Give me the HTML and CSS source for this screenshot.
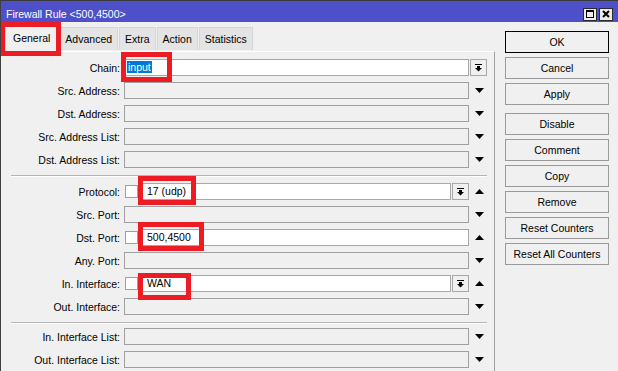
FILE: index.html
```html
<!DOCTYPE html>
<html lang="en">
  <head>
    <meta charset="UTF-8" />
    <meta name="viewport" content="width=device-width, initial-scale=1.0" />
    <title>Firewall Rule &lt;500,4500&gt;</title>
    <link rel="stylesheet" href="styles.css">
  </head>
  <body>
    <div class="window">
      <div class="titlebar">
        <span class="title">Firewall Rule &lt;500,4500&gt;</span>
        <span class="tb_btn first">
          <svg width="8" height="8" viewBox="0 0 8 8"><rect x="0.5" y="1" width="7" height="6.5" fill="none" stroke="#000" stroke-width="1"/><rect x="0" y="0" width="8" height="2" fill="#000"/></svg>
        </span>
        <span class="tb_btn">
          <svg width="8" height="8" viewBox="0 0 8 8"><path d="M1 1 L7 7 M7 1 L1 7" stroke="#000" stroke-width="2"/></svg>
        </span>
      </div>

      <div class="content">
        <div class="main">
          <div class="tabs">
            <div class="tab active">General</div>
            <div class="tab">Advanced</div>
            <div class="tab">Extra</div>
            <div class="tab">Action</div>
            <div class="tab">Statistics</div>
          </div>

          <div class="panel">
            <div class="row">
              <label>Chain:</label>
              <div class="ctrl"><div class="field"><span class="sel">input</span></div></div>
              <div class="tail">
                <span class="dropbtn chain_btn">
                  <svg width="7" height="8" viewBox="0 0 7 8"><rect x="0" y="0" width="7" height="1"/><rect x="2" y="2" width="3" height="2"/><polygon points="0,4 7,4 3.5,7.5"/></svg>
                </span>
              </div>
            </div>
            <div class="row">
              <label>Src. Address:</label>
              <div class="ctrl"><div class="field off"></div></div>
              <div class="tail"><svg class="arrow" width="9" height="5" viewBox="0 0 9 5"><polygon points="0,0 9,0 4.5,5"/></svg></div>
            </div>
            <div class="row">
              <label>Dst. Address:</label>
              <div class="ctrl"><div class="field off"></div></div>
              <div class="tail"><svg class="arrow" width="9" height="5" viewBox="0 0 9 5"><polygon points="0,0 9,0 4.5,5"/></svg></div>
            </div>
            <div class="row">
              <label>Src. Address List:</label>
              <div class="ctrl"><div class="field off"></div></div>
              <div class="tail"><svg class="arrow" width="9" height="5" viewBox="0 0 9 5"><polygon points="0,0 9,0 4.5,5"/></svg></div>
            </div>
            <div class="row">
              <label>Dst. Address List:</label>
              <div class="ctrl"><div class="field off"></div></div>
              <div class="tail"><svg class="arrow" width="9" height="5" viewBox="0 0 9 5"><polygon points="0,0 9,0 4.5,5"/></svg></div>
            </div>

            <div class="sep"></div>

            <div class="row">
              <label>Protocol:</label>
              <div class="ctrl">
                <span class="check"></span>
                <div class="field">17 (udp)</div>
                <span class="dropbtn">
                  <svg width="7" height="8" viewBox="0 0 7 8"><rect x="0" y="0" width="7" height="1"/><rect x="2" y="2" width="3" height="2"/><polygon points="0,4 7,4 3.5,7.5"/></svg>
                </span>
              </div>
              <div class="tail"><svg class="arrow" width="9" height="5" viewBox="0 0 9 5"><polygon points="0,5 9,5 4.5,0"/></svg></div>
            </div>
            <div class="row">
              <label>Src. Port:</label>
              <div class="ctrl"><div class="field off"></div></div>
              <div class="tail"><svg class="arrow" width="9" height="5" viewBox="0 0 9 5"><polygon points="0,0 9,0 4.5,5"/></svg></div>
            </div>
            <div class="row">
              <label>Dst. Port:</label>
              <div class="ctrl">
                <span class="check"></span>
                <div class="field">500,4500</div>
              </div>
              <div class="tail"><svg class="arrow" width="9" height="5" viewBox="0 0 9 5"><polygon points="0,5 9,5 4.5,0"/></svg></div>
            </div>
            <div class="row">
              <label>Any. Port:</label>
              <div class="ctrl"><div class="field off"></div></div>
              <div class="tail"><svg class="arrow" width="9" height="5" viewBox="0 0 9 5"><polygon points="0,0 9,0 4.5,5"/></svg></div>
            </div>
            <div class="row">
              <label>In. Interface:</label>
              <div class="ctrl">
                <span class="check"></span>
                <div class="field">WAN</div>
                <span class="dropbtn">
                  <svg width="7" height="8" viewBox="0 0 7 8"><rect x="0" y="0" width="7" height="1"/><rect x="2" y="2" width="3" height="2"/><polygon points="0,4 7,4 3.5,7.5"/></svg>
                </span>
              </div>
              <div class="tail"><svg class="arrow" width="9" height="5" viewBox="0 0 9 5"><polygon points="0,5 9,5 4.5,0"/></svg></div>
            </div>
            <div class="row">
              <label>Out. Interface:</label>
              <div class="ctrl"><div class="field off"></div></div>
              <div class="tail"><svg class="arrow" width="9" height="5" viewBox="0 0 9 5"><polygon points="0,0 9,0 4.5,5"/></svg></div>
            </div>

            <div class="sep tight"></div>

            <div class="row">
              <label>In. Interface List:</label>
              <div class="ctrl"><div class="field off"></div></div>
              <div class="tail"><svg class="arrow" width="9" height="5" viewBox="0 0 9 5"><polygon points="0,0 9,0 4.5,5"/></svg></div>
            </div>
            <div class="row">
              <label>Out. Interface List:</label>
              <div class="ctrl"><div class="field off"></div></div>
              <div class="tail"><svg class="arrow" width="9" height="5" viewBox="0 0 9 5"><polygon points="0,0 9,0 4.5,5"/></svg></div>
            </div>
          </div>
        </div>

        <div class="side">
          <button class="btn default">OK</button>
          <button class="btn">Cancel</button>
          <button class="btn">Apply</button>
          <button class="btn spaced">Disable</button>
          <button class="btn">Comment</button>
          <button class="btn">Copy</button>
          <button class="btn">Remove</button>
          <button class="btn">Reset Counters</button>
          <button class="btn">Reset All Counters</button>
        </div>
      </div>

      <!-- red highlight boxes -->
      <div class="mark mark_general"></div>
      <div class="mark mark_chain"></div>
      <div class="mark mark_protocol"></div>
      <div class="mark mark_dstport"></div>
      <div class="mark mark_iniface"></div>
    </div>
  </body>
</html>
```

FILE: styles.css
```css
body {
  margin: 0;
  background-color: #f0f0f0;
  font-family: "Liberation Sans", Arial, sans-serif;
  font-size: 10.5px;
  color: #000;
}

.window {
  position: relative;
  width: 618px;
  height: 371px;
  overflow: hidden;
  box-sizing: border-box;
  border-left: 1px solid #404040;
  background-color: #f0f0f0;
}

/* title bar */
.titlebar {
  height: 22px;
  box-sizing: border-box;
  border-top: 1px solid #3a3a3a;
  padding: 5px 5px 0 5px;
  display: flex;
  align-items: center;
  background-color: #4d50c8;
  color: #fff;
}
.title {
  font-size: 10.5px;
}
.tb_btn {
  width: 14px;
  height: 13px;
  box-sizing: border-box;
  border: 1px solid #2b2b2b;
  background-color: #ececec;
  display: flex;
  align-items: center;
  justify-content: center;
  margin-left: 2px;
}
.tb_btn.first {
  margin-left: auto;
}

.content {
  display: flex;
  height: 349px;
}

/* tabs */
.main {
  width: 494px;
}
.tabs {
  height: 29px;
  box-sizing: border-box;
  padding-left: 4px;
  display: flex;
  align-items: flex-end;
  gap: 1px;
}
.tab {
  height: 23px;
  margin-bottom: 1px;
  box-sizing: border-box;
  padding: 0 5px;
  border: 1px solid #d6d6d6;
  border-bottom: none;
  background-color: #e4e4e4;
  display: flex;
  align-items: center;
}
.tab.active {
  height: 27px;
  margin-bottom: 0;
  padding: 0 7px;
  background-color: #f0f0f0;
}

/* form panel */
.panel {
  height: 320px;
  box-sizing: border-box;
  border-top: 1px solid #fff;
  border-right: 1px solid #a0a0a0;
  padding-top: 7px;
}
.row {
  display: flex;
  align-items: center;
  height: 17px;
  margin-bottom: 6px;
}
.row label {
  width: 119px;
  margin-right: 4px;
  text-align: right;
  white-space: nowrap;
}
.ctrl {
  width: 345px;
  height: 17px;
  display: flex;
  align-items: center;
}
.field {
  flex: 1;
  height: 17px;
  box-sizing: border-box;
  border: 1px solid #a8a8a8;
  background-color: #fff;
  padding-left: 4px;
  line-height: 15px;
  white-space: nowrap;
}
.field.off {
  background-color: #f0f0f0;
  border-color: #a0a0a0;
}
.check + .field {
  margin-left: 4px;
}
.sel {
  margin-left: -2px;
  padding: 0 1px;
  background-color: #0078d7;
  color: #fff;
}
.check {
  width: 13px;
  height: 13px;
  margin-left: 1px;
  box-sizing: border-box;
  border: 1px solid #a0a0a0;
  background-color: #fff;
}
.dropbtn {
  width: 17px;
  height: 17px;
  margin-left: 1px;
  box-sizing: border-box;
  border: 1px solid #a8a8a8;
  background-color: #f0f0f0;
  display: flex;
  align-items: center;
  justify-content: center;
}
.tail {
  display: flex;
  align-items: center;
}
.arrow {
  margin-left: 6px;
  margin-top: -1px;
}

.sep {
  margin: 7px 7px 6px 10px;
  height: 0;
  border-top: 1px solid #b4b4b4;
  border-bottom: 1px solid #fff;
}
.sep.tight {
  margin-bottom: 4px;
}

/* button column */
.side {
  width: 123px;
  box-sizing: border-box;
  padding: 9px 0 0 10px;
  display: flex;
  flex-direction: column;
}
.btn {
  width: 104px;
  height: 22px;
  margin: 0 0 4px 0;
  padding: 0;
  box-sizing: border-box;
  border: 1px solid #9a9a9a;
  background-color: #f0f0f0;
  font-family: "Liberation Sans", Arial, sans-serif;
  font-size: 10.5px;
  color: #000;
}
.btn.default {
  border-color: #000;
}
.btn.spaced {
  margin-top: 4px;
}

/* red annotation boxes */
.mark {
  position: absolute;
  box-sizing: border-box;
  border: 5px solid #ed1c24;
}
.mark_general {
  left: -1px;
  top: 22px;
  width: 61px;
  height: 34px;
}
.mark_chain {
  left: 120px;
  top: 52px;
  width: 51px;
  height: 30px;
}
.mark_protocol {
  left: 137px;
  top: 176px;
  width: 58px;
  height: 29px;
}
.mark_dstport {
  left: 137px;
  top: 222px;
  width: 66px;
  height: 29px;
}
.mark_iniface {
  left: 137px;
  top: 273px;
  width: 53px;
  height: 27px;
}
```
